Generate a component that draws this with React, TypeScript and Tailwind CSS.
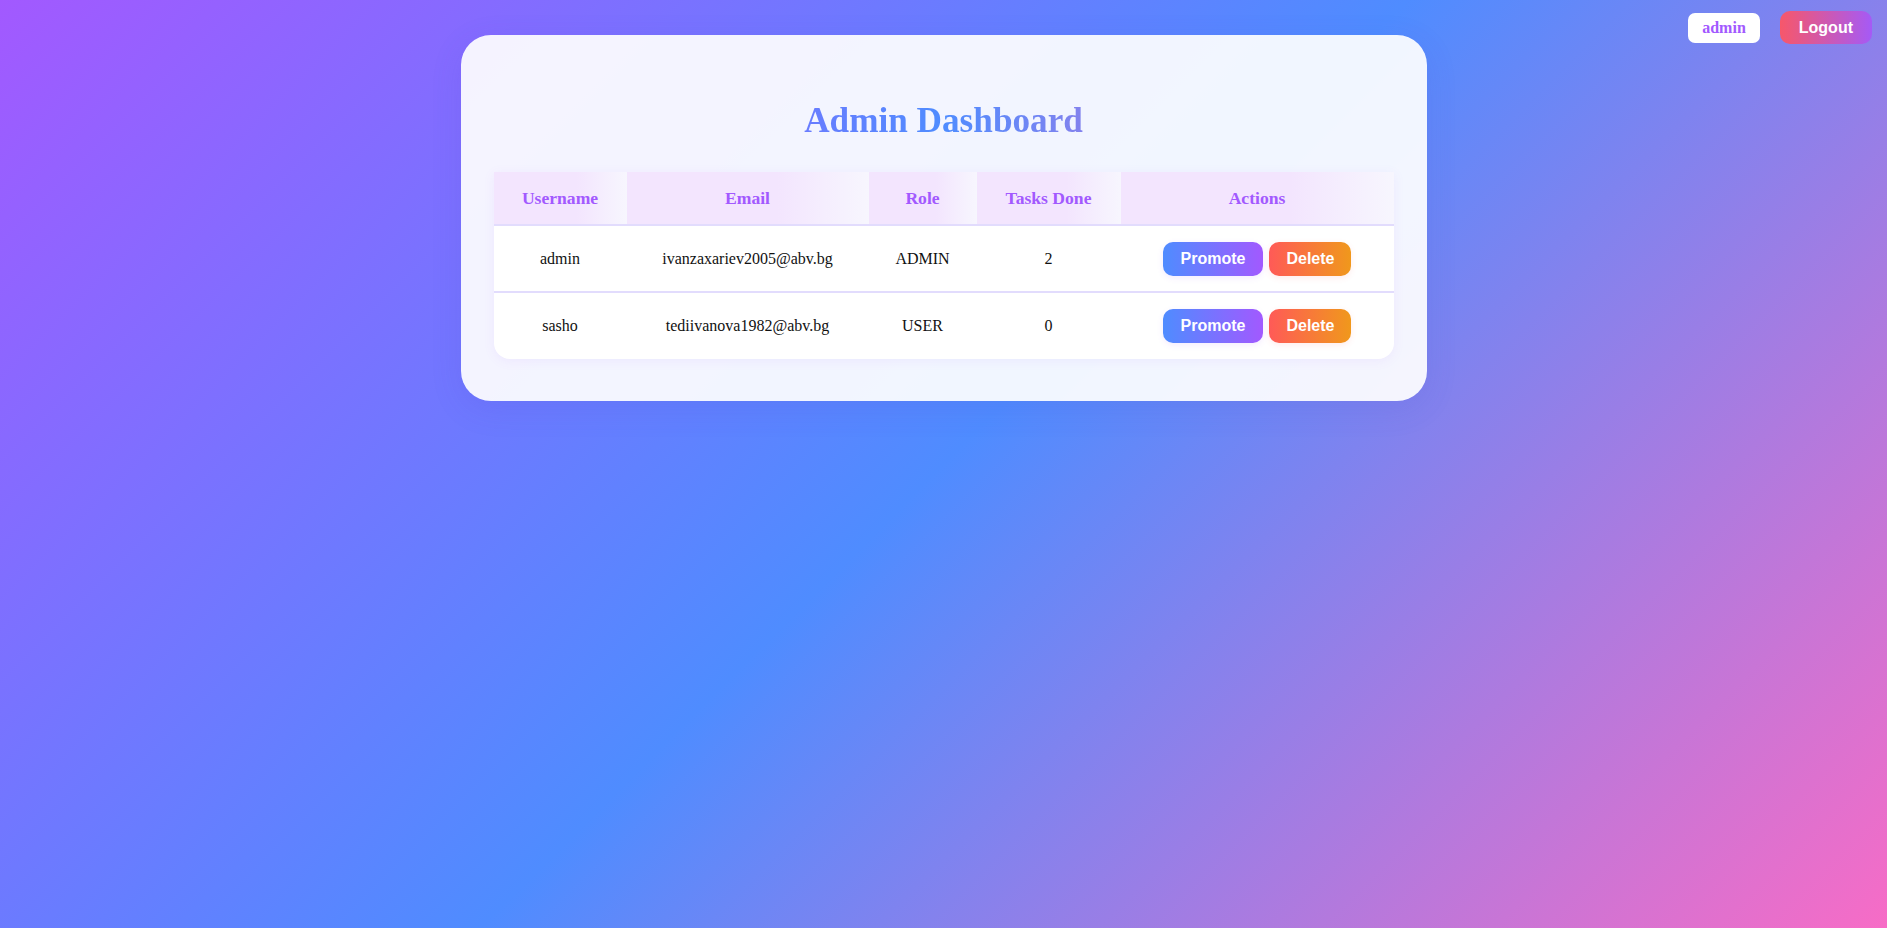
import React from "react";

const users = [
  { username: "admin", email: "ivanzaxariev2005@abv.bg", role: "ADMIN", tasks: 2 },
  { username: "sasho", email: "tediivanova1982@abv.bg", role: "USER", tasks: 0 },
];

const thCls =
  "py-4 px-0 text-center font-bold text-[17.6px] leading-[20px] text-[#a259ff] bg-[linear-gradient(90deg,#f3e5fe_62%,#f7f6fe_100%)] border-b-2 border-[#e2dcfd]";

export default function App() {
  return (
    <div
      className="relative min-h-[928px] w-full bg-[linear-gradient(135deg,#a259ff_0%,#4f8cff_50%,#f76cc6_100%)]"
      style={{ fontFamily: '"Liberation Serif", "Times New Roman", serif' }}
    >
      <div className="absolute top-[11px] right-[15px] flex items-center gap-[20px]">
        <span className="h-[30px] px-[14px] flex items-center rounded-[7px] bg-white text-[#a259ff] font-bold text-[16px]">
          admin
        </span>
        <button className="h-[33px] px-[19px] rounded-[10px] bg-[linear-gradient(90deg,#f7576a,#a55af6)] text-white font-bold text-[16px] font-['Liberation_Sans',Arial,sans-serif]">
          Logout
        </button>
      </div>

      <div className="flex justify-center pt-[35px]">
        <div className="w-[966px] rounded-[30px] bg-white/[0.92] px-[33px] pt-[66px] pb-[42px] shadow-[0_8px_32px_rgba(80,60,200,0.12)]">
          <h2 className="text-center font-bold text-[35.2px] leading-[39px] mb-[32px] bg-[linear-gradient(90deg,#a259ff_0%,#4f8cff_50%,#f76cc6_100%)] bg-clip-text text-transparent">
            Admin Dashboard
          </h2>
          <table className="w-[900px] table-fixed border-collapse bg-white rounded-b-2xl overflow-hidden shadow-[0_2px_12px_rgba(162,89,255,0.08)]">
            <colgroup>
              <col className="w-[133px]" />
              <col className="w-[242px]" />
              <col className="w-[108px]" />
              <col className="w-[144px]" />
              <col className="w-[273px]" />
            </colgroup>
            <thead>
              <tr>
                <th className={thCls}>Username</th>
                <th className={thCls}>Email</th>
                <th className={thCls}>Role</th>
                <th className={thCls}>Tasks Done</th>
                <th className={thCls}>Actions</th>
              </tr>
            </thead>
            <tbody>
              {users.map((u, i) => (
                <tr key={u.username} className={i === 0 ? "border-b-2 border-[#e2dcfd]" : ""}>
                  <td className="h-[67px] text-center text-[16px] text-[#111]">{u.username}</td>
                  <td className="text-center text-[16px] text-[#111]">{u.email}</td>
                  <td className="text-center text-[16px] text-[#111]">{u.role}</td>
                  <td className="text-center text-[16px] text-[#111]">{u.tasks}</td>
                  <td className="text-center">
                    <div className="flex justify-center gap-[6px] font-['Liberation_Sans',Arial,sans-serif]">
                      <button className="h-[34px] px-[18px] rounded-[10px] bg-[linear-gradient(90deg,#4f8cff,#a259ff)] text-white font-bold text-[16px] shadow-[0_2px_6px_rgba(162,89,255,0.12)]">
                        Promote
                      </button>
                      <button className="h-[34px] px-[17px] rounded-[10px] bg-[linear-gradient(90deg,#ff5a57,#f0981c)] text-white font-bold text-[16px] shadow-[0_2px_6px_rgba(255,90,87,0.12)]">
                        Delete
                      </button>
                    </div>
                  </td>
                </tr>
              ))}
            </tbody>
          </table>
        </div>
      </div>
    </div>
  );
}
